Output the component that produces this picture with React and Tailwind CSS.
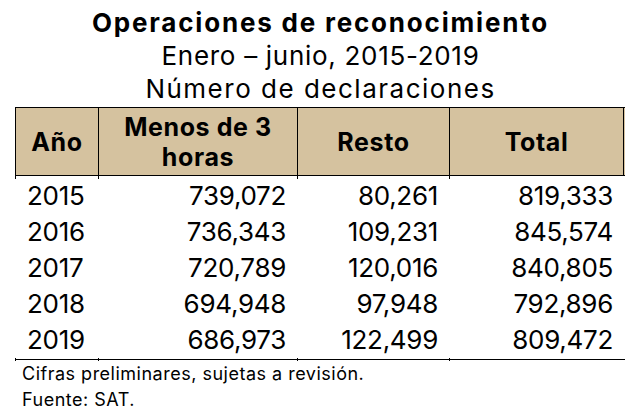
const ROWS = [
  ['2015', '739,072', '80,261', '819,333'],
  ['2016', '736,343', '109,231', '845,574'],
  ['2017', '720,789', '120,016', '840,805'],
  ['2018', '694,948', '97,948', '792,896'],
  ['2019', '686,973', '122,499', '809,472'],
]

const COLS = 'grid grid-cols-[83px_199px_152px_175px]'

// little stubs of the column rules that poke past the horizontal lines
function Ticks() {
  return (
    <div className={`${COLS} h-[3px]`}>
      <div className="border-l-[1.5px] border-black" />
      <div className="border-l-[1.5px] border-black" />
      <div className="border-l-[1.5px] border-black" />
      <div className="border-l-[1.5px] border-black" />
    </div>
  )
}

export default function App() {
  return (
    <div className="w-[641px] h-[418px] bg-white text-black font-['Inter',sans-serif]">
      <div className="pt-[6px] text-center text-[26px] leading-[33px]">
        <h1 className="font-bold tracking-[1.8px]">Operaciones de reconocimiento</h1>
        <p className="tracking-[0.7px]">Enero – junio, 2015-2019</p>
        <p className="tracking-[1.5px]">Número de declaraciones</p>
      </div>

      <div className="ml-[15px] mt-[2px] w-[610px]">
        <div className={`${COLS} h-[69px] bg-[#d5c29f] border-y-[1.5px] border-black text-[25px] leading-[30px] font-bold tracking-[0.6px] text-center`}>
          <div className="flex items-center justify-center border-l-[1.5px] border-black">Año</div>
          <div className="flex items-center justify-center border-l-[1.5px] border-black">Menos de 3<br />horas</div>
          <div className="flex items-center justify-center border-l-[1.5px] border-black">Resto</div>
          <div className="flex items-center justify-center border-x-[1.5px] border-black">Total</div>
        </div>

        <div className="relative">
          <div className="absolute inset-x-0 top-0">
            <Ticks />
          </div>
          <div className="text-[26px] leading-[31px] tracking-[-0.3px] pb-[3px] border-b-[1.5px] border-black">
            {ROWS.map((r) => (
              <div key={r[0]} className={`${COLS} h-[36px] pt-[4px]`}>
                <div className="pl-[12px]">{r[0]}</div>
                <div className="pr-[11px] text-right">{r[1]}</div>
                <div className="pr-[11px] text-right">{r[2]}</div>
                <div className="pr-[11px] text-right">{r[3]}</div>
              </div>
            ))}
          </div>
          <div className="absolute inset-x-0 bottom-[-1px]">
            <Ticks />
          </div>
        </div>
      </div>

      <div className="ml-[22px] mt-[1px] text-[18px] leading-[26px] tracking-[0.5px]">
        <p>Cifras preliminares, sujetas a revisión.</p>
        <p>Fuente: SAT.</p>
      </div>
    </div>
  )
}
